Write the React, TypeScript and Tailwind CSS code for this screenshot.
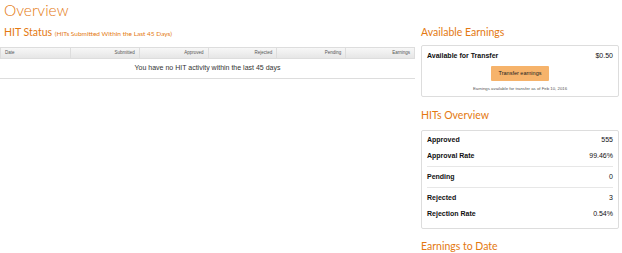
import React from "react";

const heading = "font-['Lato',sans-serif] text-[#e47911]";
const body = "font-['Liberation_Sans',Arial,sans-serif]";

const columns = ["Date", "Submitted", "Approved", "Rejected", "Pending", "Earnings"];

const StatRow = ({ label, value }: { label: string; value: string }) => (
  <div className="flex justify-between items-center h-[16px] text-[7px] text-[#111]">
    <span className="font-bold">{label}</span>
    <span>{value}</span>
  </div>
);

const Divider = () => <div className="h-px bg-[#e7e7e7] my-[2px]" />;

const App = () => {
  return (
    <div className={`w-[622px] h-[253px] bg-white overflow-hidden ${body}`}>
      <h1 className={`${heading} font-light text-[15.5px] leading-[20px] pl-[4px]`}>
        Overview
      </h1>
      <div className="flex mt-[3px]">
        {/* left: HIT status table */}
        <div className="w-[415px]">
          <h2 className={`${heading} text-[10.5px] leading-[18px] pl-[4px]`}>
            HIT Status{" "}
            <span className="text-[6.5px]">(HITs Submitted Within the Last 45 Days)</span>
          </h2>
          <div className="mt-[4px] grid grid-cols-6 h-[12px] border border-[#dddddd] bg-gradient-to-b from-[#f7f7f7] to-[#e6e6e6]">
            {columns.map((c, i) => (
              <div
                key={c}
                className={`text-[4.5px] leading-[10px] text-[#555] px-[4px] ${
                  i === 0 ? "text-left" : "text-right border-l border-[#dddddd]"
                }`}
              >
                {c}
              </div>
            ))}
          </div>
          <div className="h-[20px] flex items-center justify-center border-b border-[#dddddd] text-[7px] text-[#333]">
            You have no HIT activity within the last 45 days
          </div>
        </div>

        {/* right: earnings and overview */}
        <div className="w-[198px] ml-[6px]">
          <h2 className={`${heading} text-[10.5px] leading-[18px]`}>Available Earnings</h2>
          <div className="mt-[4px] border border-[#dddddd] rounded-[2px] px-[5px] pt-[3px] pb-[3px]">
            <div className="flex justify-between items-center h-[14px] text-[7px] text-[#111]">
              <span className="font-bold">Available for Transfer</span>
              <span>$0.50</span>
            </div>
            <div className="flex justify-center mt-[3px]">
              <button className="w-[58px] h-[15px] bg-[#f6b36b] text-[5.5px] text-[#222] rounded-[1px]">
                Transfer earnings
              </button>
            </div>
            <p className="text-center text-[4.3px] text-[#555] mt-[4px] leading-[8px]">
              Earnings available for transfer as of Feb 10, 2016
            </p>
          </div>

          <h2 className={`${heading} text-[10.5px] leading-[18px] mt-[9px]`}>HITs Overview</h2>
          <div className="mt-[6px] border border-[#dddddd] rounded-[2px] px-[5px] pt-[1px] pb-[6px]">
            <StatRow label="Approved" value="555" />
            <StatRow label="Approval Rate" value="99.46%" />
            <Divider />
            <StatRow label="Pending" value="0" />
            <Divider />
            <StatRow label="Rejected" value="3" />
            <StatRow label="Rejection Rate" value="0.54%" />
          </div>

          <h2 className={`${heading} text-[10.5px] leading-[18px] mt-[8px]`}>
            Earnings to Date
          </h2>
        </div>
      </div>
    </div>
  );
};

export default App;
